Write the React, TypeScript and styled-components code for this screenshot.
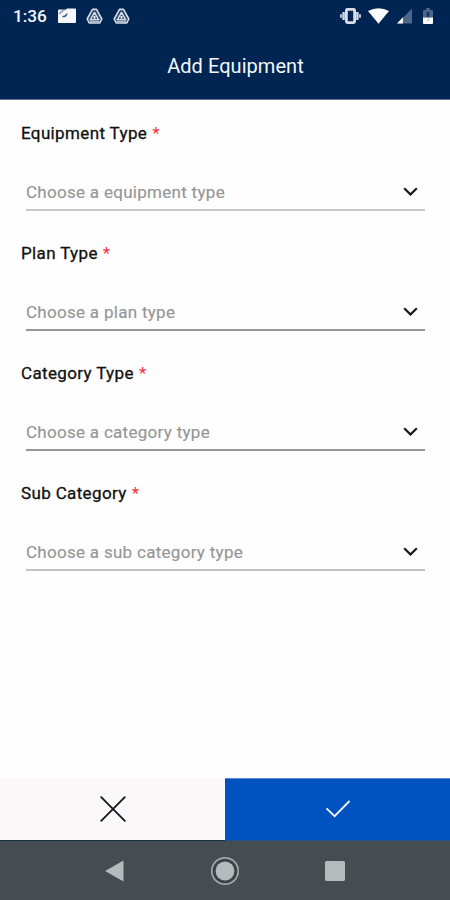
import React from 'react';
import styled, { createGlobalStyle } from 'styled-components';

const GlobalStyle = createGlobalStyle`
  * { box-sizing: border-box; }
  body { margin: 0; background: #fff; font-family: Roboto, "Liberation Sans", sans-serif; }
  svg { display: block; flex: none; }
`;

const Screen = styled.div`
  display: flex;
  flex-direction: column;
  width: 450px;
  height: 900px;
  overflow: hidden;
  background: #fefefe;
`;

const Header = styled.header`
  height: 100px;
  background: #002553;
  border-bottom: 1px solid #5c6e8c;
  color: #f4f6fa;
`;

const StatusBar = styled.div`
  display: flex;
  align-items: center;
  justify-content: space-between;
  height: 32px;
  padding: 0 17px 0 13px;
`;

const StatusGroup = styled.div<{ $gap: number }>`
  display: flex;
  align-items: center;
  gap: ${({ $gap }) => $gap}px;
`;

const BatterySlot = styled.div`
  margin-left: 4px;
`;

const Clock = styled.span`
  width: 34px;
  margin-right: 1px;
  font-size: 17.2px;
  font-weight: 500;
  line-height: 32px;
  white-space: nowrap;
`;

const Title = styled.h1`
  margin: 0;
  padding-left: 21px;
  font-size: 20px;
  font-weight: 400;
  line-height: 68px;
  letter-spacing: 0.05px;
  text-align: center;
`;

const Form = styled.main`
  display: flex;
  flex: 1;
  flex-direction: column;
  padding: 0 25px 0 21px;
`;

const Field = styled.div`
  display: flex;
  flex-direction: column;
  height: 120px;
  padding-top: 20px;
`;

const Label = styled.label`
  height: 26px;
  color: #111;
  font-size: 17px;
  font-weight: 400;
  line-height: 26px;
  letter-spacing: 0.36px;
  -webkit-text-stroke: 0.3px currentColor;
`;

const Required = styled.span`
  margin-left: 0.5px;
  color: #fb3038;
  -webkit-text-stroke: 0;
`;

const Select = styled.div<{ $line: string }>`
  display: flex;
  align-items: center;
  justify-content: space-between;
  height: 37px;
  margin: 28px 0 0 5px;
  padding-right: 7px;
  border-bottom: 2px solid ${({ $line }) => $line};
`;

const Placeholder = styled.span`
  padding-top: 2px;
  color: #959595;
  font-size: 17px;
  line-height: 33px;
  letter-spacing: 0.29px;
  -webkit-text-stroke: 0.15px currentColor;
`;

const Actions = styled.div`
  display: grid;
  grid-template-columns: 225px 225px;
  height: 63px;
`;

const Action = styled.button<{ $primary?: boolean }>`
  display: flex;
  align-items: center;
  justify-content: center;
  padding: 0 0 2px;
  border: 0;
  border-top: 1px solid ${({ $primary }) => ($primary ? '#5b86d2' : '#fbf9fa')};
  border-bottom: 1px solid ${({ $primary }) => ($primary ? '#23508e' : '#173341')};
  background: ${({ $primary }) => ($primary ? '#0052c0' : '#faf8f9')};
`;

const NavBar = styled.nav`
  display: grid;
  grid-template-columns: 1fr 30px 1fr;
  align-items: center;
  height: 59px;
  background: #454d52;
`;

const NavSlot = styled.div<{ $side?: 'left' | 'right' }>`
  display: flex;
  justify-content: ${({ $side }) => ($side === 'left' ? 'flex-end' : 'flex-start')};
  padding: ${({ $side }) => ($side === 'left' ? '0 86px 0 0' : $side === 'right' ? '0 0 0 85px' : '0')};
`;

const FolderIcon = () => (
  <svg width="18" height="16" viewBox="0 0 18 16">
    <path d="M9 .5h8q1 0 1 1V14q0 1-1 1H1q-1 0-1-1V2.5q0-1 1-1h7z" fill="#f6f6fa" />
    <path d="M0 5.5 4.5 1.5H8L2 6.5z" fill="#002553" opacity=".35" />
    <path d="M4.5 8.6q3.8 0 4.3-3" fill="none" stroke="#42536f" strokeWidth="1.5" />
  </svg>
);

const TriangleIcon = () => (
  <svg width="17" height="17" viewBox="0 0 17 17" fill="none" strokeLinejoin="round">
    <path d="M6.5 1.4h4L15.8 11l-2 4H3.2l-2-4z" fill="#243f68" stroke="#d7dde7" strokeWidth="1.6" />
    <path d="M8.5 4.5 4.2 11.8h8.6z" stroke="#d7dde7" strokeWidth="1.5" />
    <path d="M8.5 8v2.7" stroke="#eef1f6" strokeWidth="2" />
    <path d="M3.5 13.8h10" stroke="#bac3d1" strokeWidth="1.4" />
  </svg>
);

const VibrateIcon = () => (
  <svg width="21" height="16" viewBox="0 0 21 16" fill="none" stroke="#d9dfe9">
    <rect x="6.4" y="1.4" width="8.2" height="13.2" rx="1" strokeWidth="2.8" />
    <path d="M3.6 4v8M17.4 4v8" strokeWidth="2.4" />
    <path d="M1 6.2v3.6M20 6.2v3.6" strokeWidth="1.7" />
  </svg>
);

const WifiIcon = () => (
  <svg width="21" height="16" viewBox="0 0 21 16">
    <path d="M0 3Q10.5-2.5 21 3L10.5 15.8z" fill="#fff" />
  </svg>
);

const SignalIcon = () => (
  <svg width="15" height="16" viewBox="0 0 15 16">
    <path d="M15 .5v15H0z" fill="#4d668a" />
    <path d="M6 9.2v6.3H0z" fill="#fff" />
  </svg>
);

const BatteryIcon = () => (
  <svg width="10" height="16" viewBox="0 0 11 17" preserveAspectRatio="none">
    <path d="M3.5 0h4v2H10q1 0 1 1v7H0V3q0-1 1-1h2.5z" fill="#4d668a" />
    <path d="M4 4h3v6H4z" fill="#143660" />
    <path d="M0 10h11v6q0 1-1 1H1q-1 0-1-1z" fill="#fff" />
    <path d="m5 14 1.8-3" stroke="#8fa0b5" fill="none" />
  </svg>
);

const ChevronIcon = () => (
  <svg width="15" height="10" viewBox="0 0 15 10" fill="none" stroke="#121212" strokeWidth="2.2">
    <path d="m1.2 1.3 6.3 6.2 6.3-6.2" />
  </svg>
);

const CloseIcon = () => (
  <svg width="26" height="26" viewBox="0 0 26 26" fill="none" stroke="#17141f" strokeWidth="1.8" strokeLinecap="round">
    <path d="m1.2 1.2 23.6 23.6M24.8 1.2 1.2 24.8" />
  </svg>
);

const CheckIcon = () => (
  <svg width="24" height="18" viewBox="0 0 24 18" fill="none" stroke="#f0f5ff" strokeWidth="1.8" strokeLinecap="round">
    <path d="m1 8.8 7.6 7.4L23 1.5" />
  </svg>
);

const BackIcon = () => (
  <svg width="19" height="22" viewBox="0 0 19 22">
    <path d="M18.5.5v21L0 11z" fill="#b5bbbd" />
  </svg>
);

const HomeIcon = () => (
  <svg width="30" height="30" viewBox="0 0 30 30">
    <circle cx="15" cy="15" r="13.2" fill="#3b4549" stroke="#a1a9ac" strokeWidth="1.7" />
    <circle cx="15" cy="15" r="9.4" fill="#b5bbbd" />
  </svg>
);

const RecentsIcon = () => (
  <svg width="20" height="20" viewBox="0 0 20 20">
    <rect width="20" height="20" rx="1.6" fill="#b5bbbd" />
  </svg>
);

const fields = [
  { label: 'Equipment Type', hint: 'Choose a equipment type', line: '#c9c9c9' },
  { label: 'Plan Type', hint: 'Choose a plan type', line: '#979797' },
  { label: 'Category Type', hint: 'Choose a category type', line: '#979797' },
  { label: 'Sub Category', hint: 'Choose a sub category type', line: '#c3c3c3' },
];

export default function App() {
  return (
    <>
      <GlobalStyle />
      <Screen>
        <Header>
          <StatusBar>
            <StatusGroup $gap={10}>
              <Clock>1:36</Clock>
              <FolderIcon />
              <TriangleIcon />
              <TriangleIcon />
            </StatusGroup>
            <StatusGroup $gap={7.5}>
              <VibrateIcon />
              <WifiIcon />
              <SignalIcon />
              <BatterySlot><BatteryIcon /></BatterySlot>
            </StatusGroup>
          </StatusBar>
          <Title>Add Equipment</Title>
        </Header>
        <Form>
          {fields.map((field) => (
            <Field key={field.label}>
              <Label>
                {field.label} <Required>*</Required>
              </Label>
              <Select $line={field.line}>
                <Placeholder>{field.hint}</Placeholder>
                <ChevronIcon />
              </Select>
            </Field>
          ))}
        </Form>
        <Actions>
          <Action aria-label="Cancel"><CloseIcon /></Action>
          <Action $primary aria-label="Confirm"><CheckIcon /></Action>
        </Actions>
        <NavBar>
          <NavSlot $side="left"><BackIcon /></NavSlot>
          <NavSlot><HomeIcon /></NavSlot>
          <NavSlot $side="right"><RecentsIcon /></NavSlot>
        </NavBar>
      </Screen>
    </>
  );
}
